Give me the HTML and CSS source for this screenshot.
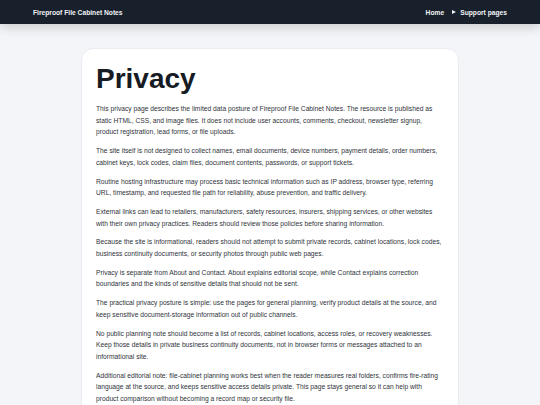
FILE: index.html
```html
<!DOCTYPE html>
<html lang="en">
<head>
<meta charset="utf-8">
<title>Privacy - Fireproof File Cabinet Notes</title>
<link rel="stylesheet" href="styles.css">
</head>
<body>
<header class="site-header">
  <a class="brand" href="#">Fireproof File Cabinet Notes</a>
  <nav class="nav">
    <a class="nav-link" href="#">Home</a>
    <span class="nav-menu"><span class="tri"></span>Support pages</span>
  </nav>
</header>
<main class="card">
  <h1 class="title">Privacy</h1>
  <p>This privacy page describes the limited data posture of Fireproof File Cabinet Notes. The resource is published as static HTML, CSS, and image files. It does not include user accounts, comments, checkout, newsletter signup, product registration, lead forms, or file uploads.</p>
  <p>The site itself is not designed to collect names, email documents, device numbers, payment details, order numbers, cabinet keys, lock codes, claim files, document contents, passwords, or support tickets.</p>
  <p>Routine hosting infrastructure may process basic technical information such as IP address, browser type, referring URL, timestamp, and requested file path for reliability, abuse prevention, and traffic delivery.</p>
  <p>External links can lead to retailers, manufacturers, safety resources, insurers, shipping services, or other websites with their own privacy practices. Readers should review those policies before sharing information.</p>
  <p>Because the site is informational, readers should not attempt to submit private records, cabinet locations, lock codes, business continuity documents, or security photos through public web pages.</p>
  <p>Privacy is separate from About and Contact. About explains editorial scope, while Contact explains correction boundaries and the kinds of sensitive details that should not be sent.</p>
  <p>The practical privacy posture is simple: use the pages for general planning, verify product details at the source, and keep sensitive document-storage information out of public channels.</p>
  <p>No public planning note should become a list of records, cabinet locations, access roles, or recovery weaknesses. Keep those details in private business continuity documents, not in browser forms or messages attached to an informational site.</p>
  <p>Additional editorial note: file-cabinet planning works best when the reader measures real folders, confirms fire-rating language at the source, and keeps sensitive access details private. This page stays general so it can help with product comparison without becoming a record map or security file.</p>
</main>
</body>
</html>
```
FILE: styles.css
```css
* { box-sizing: border-box; }
html, body { margin: 0; padding: 0; }
body {
  background: #f3f5f8;
  font-family: "Liberation Sans", Arial, sans-serif;
  color: #2b2f36;
}
.site-header {
  height: 24px;
  background: #18202b;
  display: flex;
  align-items: center;
  justify-content: space-between;
  padding: 0 33px 0 33px;
  box-shadow: 0 3px 12px rgba(0, 0, 0, 0.18);
  position: relative;
}
.brand {
  color: #f3f4f6;
  font-size: 6.7px;
  font-weight: 700;
  text-decoration: none;
}
.nav {
  display: flex;
  align-items: center;
  gap: 8px;
  font-size: 6.7px;
  font-weight: 700;
  color: #f3f4f6;
}
.nav-link { color: #f3f4f6; text-decoration: none; }
.nav-menu { display: flex; align-items: center; }
.tri {
  width: 0;
  height: 0;
  border-left: 4px solid #f3f4f6;
  border-top: 2.5px solid transparent;
  border-bottom: 2.5px solid transparent;
  margin-right: 4px;
}
.card {
  width: 378px;
  margin: 24px auto 0;
  background: #ffffff;
  border: 1px solid #e9ecf1;
  border-radius: 12px;
  padding: 14px 14px 10px 14px;
}
.title {
  font-size: 28px;
  line-height: 31px;
  font-weight: 700;
  color: #161b24;
  margin: 0 0 9px;
}
.card p {
  font-size: 6.7px;
  line-height: 11.7px;
  margin: 0 0 7px;
  color: #2f333a;
}
```
